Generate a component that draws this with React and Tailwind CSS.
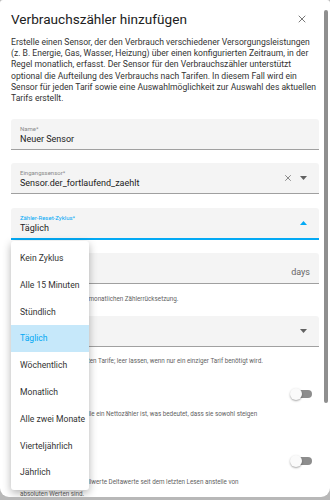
import { X } from "lucide-react";

const FONT = { fontFamily: "Roboto, 'Noto Sans', sans-serif" };

const DESC = [
  "Erstelle einen Sensor, der den Verbrauch verschiedener Versorgungsleistungen",
  "(z. B. Energie, Gas, Wasser, Heizung) über einen konfigurierten Zeitraum, in der",
  "Regel monatlich, erfasst. Der Sensor für den Verbrauchszähler unterstützt",
  "optional die Aufteilung des Verbrauchs nach Tarifen. In diesem Fall wird ein",
  "Sensor für jeden Tarif sowie eine Auswahlmöglichkeit zur Auswahl des aktuellen",
  "Tarifs erstellt.",
];

const OPTIONS = [
  "Kein Zyklus",
  "Alle 15 Minuten",
  "Stündlich",
  "Täglich",
  "Wöchentlich",
  "Monatlich",
  "Alle zwei Monate",
  "Vierteljährlich",
  "Jährlich",
];

function Caret({ up, color = "#616161" }) {
  return (
    <svg width="7" height="4" viewBox="0 0 7 4" className="shrink-0">
      {up ? <path d="M0 4 L3.5 0 L7 4 Z" fill={color} /> : <path d="M0 0 L3.5 4 L7 0 Z" fill={color} />}
    </svg>
  );
}

function Field({ label, value, focused, children, className = "" }) {
  return (
    <div
      className={`mx-[11px] rounded-t-[3px] bg-[#f4f4f4] flex items-center pl-[9px] pr-[12px] ${
        focused ? "border-b-2 border-[#03a9f4] h-[32px]" : "border-b border-[#a0a0a0] h-[31px]"
      } ${className}`}
    >
      <div className="flex-1 min-w-0 flex flex-col justify-center pt-[1px]">
        {label && (
          <div className={`text-[6px] leading-[8px] ${focused ? "text-[#03a9f4]" : "text-[#8a8a8a]"}`}>{label}</div>
        )}
        {value && <div className="text-[9px] leading-[12px] text-[#222]">{value}</div>}
      </div>
      {children}
    </div>
  );
}

function Helper({ children, className = "" }) {
  return <div className={`pl-[20px] text-[6.3px] leading-[12px] text-[#5f5f5f] whitespace-nowrap ${className}`}>{children}</div>;
}

function Toggle() {
  return (
    <div className="relative w-[22px] h-[12px] shrink-0">
      <div className="absolute left-[6px] top-[2px] w-[16px] h-[8px] rounded-full bg-[#8d8d8d]" />
      <div className="absolute left-0 top-0 w-[12px] h-[12px] rounded-full bg-[#fafafa] shadow-[0_1px_2px_rgba(0,0,0,0.35)]" />
    </div>
  );
}

export default function App() {
  return (
    <div className="w-[330px] h-[500px] bg-[#b8b8b8] overflow-hidden" style={FONT}>
      <div className="relative w-[330px] h-[497px] bg-white rounded-t-[3px] rounded-b-[9px] overflow-hidden">
        {/* header */}
        <div className="flex items-center pl-[11px] pr-[22px] pt-[9px] h-[29px]">
          <div className="flex-1 text-[13.6px] leading-[20px] text-[#212121]">Verbrauchszähler hinzufügen</div>
          <X size={12} strokeWidth={1.6} color="#555" />
        </div>

        {/* description */}
        <div className="px-[11px] pt-[8px] text-[8.6px] leading-[11.2px] text-[#333] whitespace-nowrap">
          {DESC.map((l) => (
            <div key={l}>{l}</div>
          ))}
        </div>

        <div className="pt-[15px]">
          <Field label="Name*" value="Neuer Sensor" />
          <Field label="Eingangssensor*" value="Sensor.der_fortlaufend_zaehlt" className="mt-[13px]">
            <X size={10} strokeWidth={1.6} color="#555" className="mr-[7px]" />
            <Caret />
          </Field>
          <Field label="Zähler-Reset-Zyklus*" value="Täglich" focused className="mt-[14px]">
            <Caret up color="#03a9f4" />
          </Field>
          <Field className="mt-[13px]">
            <span className="text-[9px] text-[#666] mt-[10px] -mr-[3px]">days</span>
          </Field>
          <Helper className="mt-[9px]">Versatz in Tagen bei der monatlichen Zählerrücksetzung.</Helper>
          <Field className="mt-[11px]">
            <Caret />
          </Field>
          <Helper className="mt-[8px]">Eine Liste der unterstützten Tarife; leer lassen, wenn nur ein einziger Tarif benötigt wird.</Helper>

          <div className="flex items-center pl-[11px] pr-[18px] mt-[20px] h-[14px]">
            <span className="flex-1 text-[9px] text-[#222]">Nettoverbrauch</span>
            <Toggle />
          </div>
          <Helper className="mt-[7px]">
            Aktivieren, wenn die Quelle ein Nettozähler ist, was bedeutet, dass sie sowohl steigen
            <br />
            als auch fallen kann.
          </Helper>

          <div className="flex items-center pl-[11px] pr-[18px] mt-[22px] h-[14px]">
            <span className="flex-1 text-[9px] text-[#222]">Deltawerte</span>
            <Toggle />
          </div>
          <Helper className="mt-[8px]">
            Aktivieren, wenn die Quellwerte Deltawerte seit dem letzten Lesen anstelle von
            <br />
            absoluten Werten sind.
          </Helper>
        </div>

        {/* scrollbar thumb */}
        <div className="absolute right-[2px] top-[10px] w-[4px] h-[393px] rounded-[2px] bg-[#8f8f8f]" />

        {/* open select menu */}
        <div className="absolute left-[11px] top-[241px] w-[78px] py-[4px] bg-white rounded-[3px] shadow-[0_3px_8px_rgba(0,0,0,0.3)]">
          {OPTIONS.map((o) => (
            <div
              key={o}
              className={`h-[26.8px] flex items-center pl-[9px] text-[8.6px] whitespace-nowrap ${
                o === "Täglich" ? "bg-[#c6e8fa] text-[#03a9f4]" : "text-[#333]"
              }`}
            >
              {o}
            </div>
          ))}
        </div>
      </div>
    </div>
  );
}
